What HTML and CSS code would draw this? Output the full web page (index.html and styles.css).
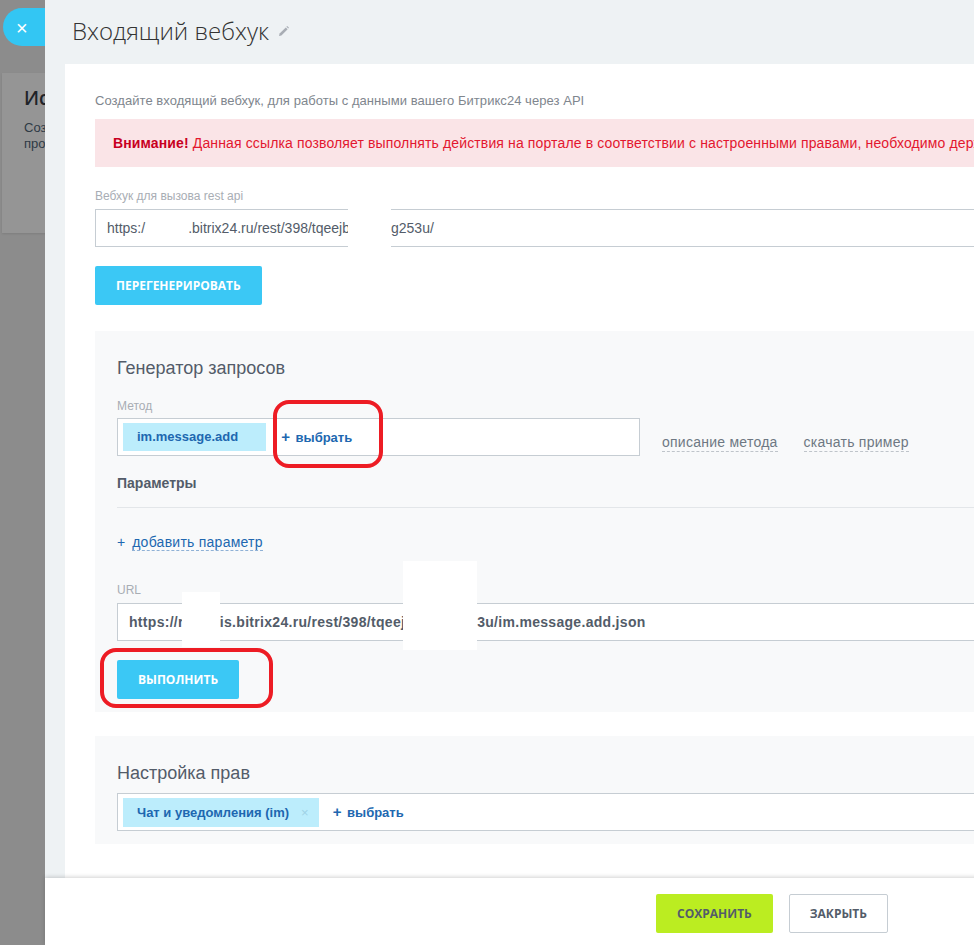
FILE: index.html
```html
<!DOCTYPE html>
<html lang="ru">
<head>
    <meta charset="UTF-8">
    <meta name="viewport" content="width=device-width, initial-scale=1.0">
    <title>Входящий вебхук</title>
    <link rel="stylesheet" href="styles.css">
</head>
<body>

    <div class="screen">

        <!-- страница под слайдером (затемнена) -->
        <div class="backdrop">
            <div class="bg-card">
                <div class="bg-card-title">Исх</div>
                <div class="bg-card-text">Созд<br>прои</div>
            </div>
        </div>

        <button class="slider-close">&times;</button>

        <div class="slider">
            <div class="slider-header">
                <h1 class="slider-title">Входящий вебхук</h1>
                <svg class="edit-icon" width="11" height="11" viewBox="0 0 11 11">
                    <path d="M1 10 L1.6 7.6 L7.8 1.4 L9.6 3.2 L3.4 9.4 Z" fill="#a8adb4"/>
                    <path d="M8.4 0.8 L9.2 0 L11 1.8 L10.2 2.6 Z" fill="#a8adb4"/>
                </svg>
            </div>

            <div class="slider-content">
                <div class="desc">Создайте входящий вебхук, для работы с данными вашего Битрикс24 через API</div>

                <div class="alert"><strong>Внимание!</strong> Данная ссылка позволяет выполнять действия на портале в соответствии с настроенными правами, необходимо держать её в секрете</div>

                <div class="field-label label-hook">Вебхук для вызова rest api</div>
                <div class="field">https:/<span class="mask mask-hook-a"></span>.bitrix24.ru/rest/398/tqeejb<span class="mask mask-tall mask-hook-b"></span>g253u/</div>

                <button class="btn btn-regen">Перегенерировать</button>

                <div class="section">
                    <div class="section-title">Генератор запросов</div>

                    <div class="field-label label-method">Метод</div>
                    <div class="method-row">
                        <div class="field field-tags field-method">
                            <span class="tag tag-method">im.message.add</span>
                            <span class="tag-add"><b>+</b> выбрать</span>
                        </div>
                        <div class="method-links">
                            <span class="dashed-link">описание метода</span>
                            <span class="dashed-link">скачать пример</span>
                        </div>
                    </div>

                    <div class="params-title">Параметры</div>
                    <div class="params-line"></div>
                    <div class="add-param">+<span class="dashed-link blue">добавить параметр</span></div>

                    <div class="field-label label-url">URL</div>
                    <div class="field field-url">https://r<span class="mask mask-tall mask-url-a"></span>is.bitrix24.ru/rest/398/tqeej<span class="mask mask-tall mask-url-b"></span>3u/im.message.add.json</div>

                    <button class="btn btn-run">Выполнить</button>
                </div>

                <div class="section section-rights">
                    <div class="section-title">Настройка прав</div>
                    <div class="field field-tags field-rights">
                        <span class="tag tag-scope">Чат и уведомления (im)<i class="tag-del">&times;</i></span>
                        <span class="tag-add"><b>+</b> выбрать</span>
                    </div>
                </div>
            </div>

            <div class="slider-footer">
                <button class="btn btn-save">Сохранить</button>
                <button class="btn btn-close">Закрыть</button>
            </div>
        </div>
    </div>

    <!-- пометки красным маркером поверх скриншота -->
    <div class="marker marker-select"></div>
    <div class="marker marker-run"></div>

</body>
</html>
```

FILE: styles.css
```css
* {
    box-sizing: border-box;
}

body {
    margin: 0;
    width: 974px;
    height: 945px;
    overflow: hidden;
    font-family: "Liberation Sans", Arial, sans-serif;
    background-color: #8c8c8c;
    position: relative;
}

.screen {
    display: flex;
    height: 945px;
    position: relative;
}

/* затемненная страница слева */
.backdrop {
    flex: 0 0 45px;
    background-color: #8c8c8c;
    overflow: hidden;
    padding-top: 73px;
    padding-left: 2px;
}

.bg-card {
    width: 60px;
    height: 160px;
    background-color: #959595;
    padding: 13px 0 13px 22px;
    box-shadow: 0 1px 2px rgba(0, 0, 0, 0.1);
    white-space: nowrap;
}

.bg-card-title {
    font-family: "Open Sans", sans-serif;
    font-weight: 600;
    font-size: 19px;
    color: #1f2328;
    line-height: 24px;
}

.bg-card-text {
    margin-top: 10px;
    font-size: 13px;
    line-height: 16px;
    color: #2e3a45;
}

.slider-close {
    position: absolute;
    top: 8px;
    left: 3px;
    width: 70px;
    height: 38px;
    border: none;
    border-radius: 19px;
    background-color: #33c6f3;
    color: #fff;
    font-size: 20px;
    line-height: 38px;
    text-align: left;
    padding-left: 13px;
    font-family: "Liberation Sans", sans-serif;
}

/* слайдер */
.slider {
    flex: 0 0 1454px;
    position: relative;
    z-index: 1;
    background-color: #eef2f4;
    display: flex;
    flex-direction: column;
}

.slider-header {
    height: 64px;
    padding: 0 0 4px 27px;
    display: flex;
    align-items: center;
}

.slider-title {
    margin: 0;
    font-family: "Open Sans", sans-serif;
    font-weight: 300;
    font-size: 24px;
    color: #333;
}

.edit-icon {
    margin-left: 9px;
    margin-top: 2px;
}

.slider-content {
    flex: 1;
    margin-left: 20px;
    background-color: #fff;
    padding: 29px 30px 0;
}

.desc {
    font-size: 13px;
    line-height: 16px;
    letter-spacing: 0.05px;
    color: #80868e;
}

.alert {
    margin-top: 10px;
    height: 48px;
    line-height: 48px;
    padding: 0 18px;
    background-color: #fae4e7;
    color: #e3172f;
    font-size: 14px;
    letter-spacing: 0.13px;
    white-space: nowrap;
    overflow: hidden;
}

.alert strong {
    color: #c8001f;
}

.field-label {
    font-size: 12px;
    line-height: 15px;
    color: #a8adb4;
}

.label-hook {
    margin-top: 22px;
}

.field {
    margin-top: 5px;
    height: 38px;
    border: 1px solid #c6cdd3;
    background-color: #fff;
    padding: 0 11px;
    font-size: 14px;
    line-height: 36px;
    color: #535c69;
    white-space: nowrap;
}

.mask {
    display: inline-block;
    vertical-align: top;
    width: 43px;
    height: 36px;
    position: relative;
}

.mask-tall::before {
    content: '';
    position: absolute;
    left: -2px;
    right: 0;
    background-color: #fff;
}

.mask-hook-b {
    width: 41px;
}

.mask-hook-b::before {
    top: -5px;
    bottom: -5px;
}

.btn {
    height: 39px;
    border: none;
    border-radius: 2px;
    padding: 0 22px;
    background-color: #3bc8f5;
    color: #fff;
    font-family: "Open Sans", sans-serif;
    font-weight: 700;
    font-size: 12px;
    text-transform: uppercase;
    cursor: pointer;
}

.btn-regen {
    display: block;
    margin-top: 19px;
    padding: 0 21px;
}

/* серые блоки */
.section {
    margin-top: 26px;
    background-color: #f8f9fa;
    padding: 26px 22px 13px;
}

.section-title {
    font-size: 18px;
    line-height: 22px;
    color: #535c69;
}

.label-method {
    margin-top: 20px;
}

.method-row {
    display: flex;
    align-items: flex-start;
}

.field-tags {
    display: flex;
    align-items: center;
    padding: 0 5px;
}

.field-method {
    margin-top: 4px;
    width: 523px;
}

.tag {
    height: 28px;
    line-height: 28px;
    background-color: #bcedfc;
    color: #2067b0;
    font-weight: 700;
    font-size: 13px;
}

.tag-method {
    padding: 0 28px 0 14px;
}

.tag-scope {
    height: 29px;
    line-height: 29px;
    padding: 0 10px 0 14px;
}

.tag-del {
    font-style: normal;
    font-weight: 400;
    color: #9fd2e6;
    margin-left: 12px;
    font-size: 13px;
}

.tag-add {
    margin-left: 14px;
    color: #2067b0;
    font-weight: 700;
    font-size: 13px;
}

.tag-method + .tag-add {
    margin-left: 15px;
}

.tag-add b {
    font-size: 15px;
    margin-right: 2px;
}

.method-links {
    display: flex;
    gap: 26px;
    margin-left: 22px;
    margin-top: 20px;
}

.dashed-link {
    font-size: 14px;
    line-height: 17px;
    letter-spacing: 0.25px;
    color: #6e7883;
    border-bottom: 1px dashed #bfc4ca;
}

.dashed-link.blue {
    margin-left: 7px;
    color: #2067b0;
    border-bottom-color: #8fb1d6;
}

.params-title {
    margin-top: 19px;
    font-weight: 700;
    font-size: 14px;
    line-height: 17px;
    color: #535c69;
}

.params-line {
    margin-top: 15px;
    border-top: 1px solid #e3e6e9;
    margin-right: -22px;
}

.add-param {
    margin-top: 26px;
    font-size: 14px;
    line-height: 17px;
    color: #2067b0;
}

.label-url {
    margin-top: 32px;
}

.field-url {
    padding-left: 11px;
    font-weight: 700;
    letter-spacing: 0.3px;
}

.mask-url-a {
    width: 36px;
}

.mask-url-a::before {
    top: -12px;
    bottom: -7px;
}

.mask-url-b {
    width: 72px;
}

.mask-url-b::before {
    top: -43px;
    bottom: -10px;
}

.btn-run {
    display: block;
    margin-top: 19px;
    padding: 0 21px;
}

.section-rights {
    margin-top: 24px;
}

.field-rights {
    margin-top: 9px;
}

/* подвал слайдера */
.slider-footer {
    height: 67px;
    background-color: #fff;
    box-shadow: 0 -1px 4px rgba(0, 0, 0, 0.18);
    display: flex;
    justify-content: center;
    align-items: flex-start;
    gap: 16px;
    padding-top: 16px;
    position: relative;
}

.btn-save {
    background-color: #bbed21;
    color: #535c69;
    padding: 0 21px;
}

.btn-close {
    background-color: #fff;
    color: #535c69;
    border: 1px solid #c6cdd3;
    padding: 0 20px;
}

/* красные пометки */
.marker {
    position: absolute;
    border: 4px solid #ed1c24;
    border-radius: 16px;
    z-index: 5;
}

.marker-select {
    left: 273px;
    top: 400px;
    width: 110px;
    height: 68px;
}

.marker-run {
    left: 100px;
    top: 648px;
    width: 173px;
    height: 60px;
}
```
